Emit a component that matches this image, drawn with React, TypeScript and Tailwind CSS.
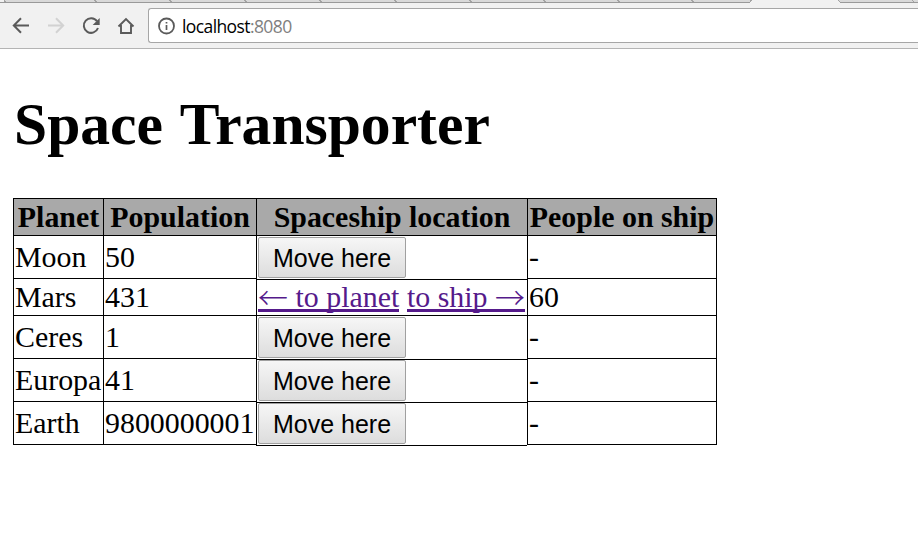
import React from "react";

const tabEdges = [94, 169, 244, 319, 394, 469, 543, 617, 691];

const planets = ["Moon", "Mars", "Ceres", "Europa", "Earth"];
const populations = ["50", "431", "1", "41", "9800000001"];
const onShip = ["-", "60", "-", "-", "-"];

function TabStrip() {
  return (
    <svg className="block h-[9px] w-full shrink-0" viewBox="0 0 918 9" shapeRendering="crispEdges">
      <rect width="918" height="9" fill="#f1f1f1" />
      <path d="M5 0H752L750.500 2H6Z" fill="#d9d9d9" />
      <path d="M838 0H918V2H840Z" fill="#d9d9d9" />
      <path d="M0 2H750V3H0ZM840 2H918V3H840Z" fill="#999" />
      {tabEdges.map((x) => (
        <path key={x} d={`M${x} 0h2v1h1v1h-2v-1h-1z`} fill="#a3a3a3" />
      ))}
      <path d="M4 0h1v1h1v1h-2zM750 0h2v1h-1v1h-1zM838 0h1v1h1v1h-1zM912 0h1v1h1v1h-1z" fill="#a3a3a3" />
    </svg>
  );
}

function Toolbar() {
  return (
    <div className="flex h-[39px] items-start bg-[#f1f1f1] pl-[11px]">
      <svg className="h-[34px] w-[137px] shrink-0" viewBox="11 9 137 34" fill="none" strokeWidth="2">
        <path d="M29 25.500H14M21 18.200L13.800 25.500L21 32.800" stroke="#5a5a5a" />
        <path d="M48 25.500H63M56 18.200L63.200 25.500L56 32.800" stroke="#d2d2d2" />
        <path d="M97 21.200A7.300 7.300 0 1 0 98 28" stroke="#5a5a5a" />
        <path d="M99.700 18V25H92.700Z" fill="#5a5a5a" />
        <path d="M118.500 26.500L126 19L133.500 26.500M121 25V33H131V25" stroke="#5a5a5a" strokeWidth="1.900" />
      </svg>
      <div className="-mt-px flex h-[35px] flex-1 items-center rounded-l-[3px] border border-r-0 border-[#a6a6a6] bg-white pl-[9px]">
        <svg className="h-[18px] w-[18px] shrink-0" viewBox="0 0 18 18" fill="none" stroke="#5a5a5a">
          <circle cx="8.500" cy="9" r="7.500" strokeWidth="1.800" />
          <path d="M8.500 8V13M8.500 5V6.600" strokeWidth="1.700" />
        </svg>
        <div className="ml-[6px] whitespace-nowrap font-['Open_Sans','Noto_Sans',sans-serif] text-[17.500px] leading-[24px] tracking-[-0.600px] text-black">
          localhost<span className="text-[#808080]">:8080</span>
        </div>
      </div>
    </div>
  );
}

function Head({ children }: { children: React.ReactNode }) {
  return (
    <div className="flex h-[38px] items-center justify-center whitespace-nowrap border-y border-black bg-[#a9a9a9] font-bold">
      {children}
    </div>
  );
}

function TextColumn({ title, values, className }: { title: string; values: string[]; className: string }) {
  return (
    <div className={"border-l border-black " + className}>
      <Head>{title}</Head>
      {values.map((value, i) => (
        <div
          key={i}
          className={"flex items-center whitespace-nowrap border-b border-black pl-px " + (i === 1 ? "h-[37px]" : "h-[43px]")}
        >
          {value}
        </div>
      ))}
    </div>
  );
}

function MoveCell({ tall = false }: { tall?: boolean }) {
  return (
    <div className={"flex items-start border-b border-black pl-px " + (tall ? "h-[44px] pt-px" : "h-[43px]")}>
      <button className="h-[41px] w-[148px] whitespace-nowrap rounded-[2px] border border-[#a0a0a0] bg-gradient-to-b from-[#f6f6f6] to-[#dddddd] font-['Liberation_Sans',Arial,sans-serif] text-[25px] leading-[38px] text-black">
        Move here
      </button>
    </div>
  );
}

function ShipColumn() {
  const link = "flex h-[31px] border-b-[3px] border-[#551a8b] leading-[32px]";
  const arrow = "w-[30px] text-center font-['Noto_Sans_CJK_SC',sans-serif] font-light leading-[30px]";
  return (
    <div className="w-[271px] border-l border-black">
      <Head>Spaceship location</Head>
      <MoveCell tall />
      <div className="flex h-[36px] items-start justify-between whitespace-nowrap border-b border-black pl-px pr-[2px] pt-px text-[#551a8b]">
        <a className={link}>
          <span className={arrow}>←</span>
          <span className="whitespace-pre"> to planet</span>
        </a>
        <a className={link}>
          <span className="whitespace-pre">to ship </span>
          <span className={arrow}>→</span>
        </a>
      </div>
      <MoveCell tall />
      <MoveCell />
      <MoveCell />
    </div>
  );
}

export default function App() {
  return (
    <div className="flex h-[541px] w-[918px] flex-col overflow-hidden bg-white text-black">
      <TabStrip />
      <Toolbar />
      <div className="h-px shrink-0 bg-[#b4b4b4]" />
      <main className="pl-[13px] pt-[41px] font-['Liberation_Serif','Times_New_Roman',serif]">
        <h1 className="h-[108px] whitespace-nowrap pl-px text-[59.600px] font-bold leading-[68px] [word-spacing:3px]">Space Transporter</h1>
        <div className="flex items-start text-[29.900px] leading-[34px]">
          <TextColumn title="Planet" values={planets} className="w-[90px]" />
          <TextColumn title="Population" values={populations} className="w-[153px]" />
          <ShipColumn />
          <TextColumn title="People on ship" values={onShip} className="w-[190px] border-r" />
        </div>
      </main>
    </div>
  );
}
